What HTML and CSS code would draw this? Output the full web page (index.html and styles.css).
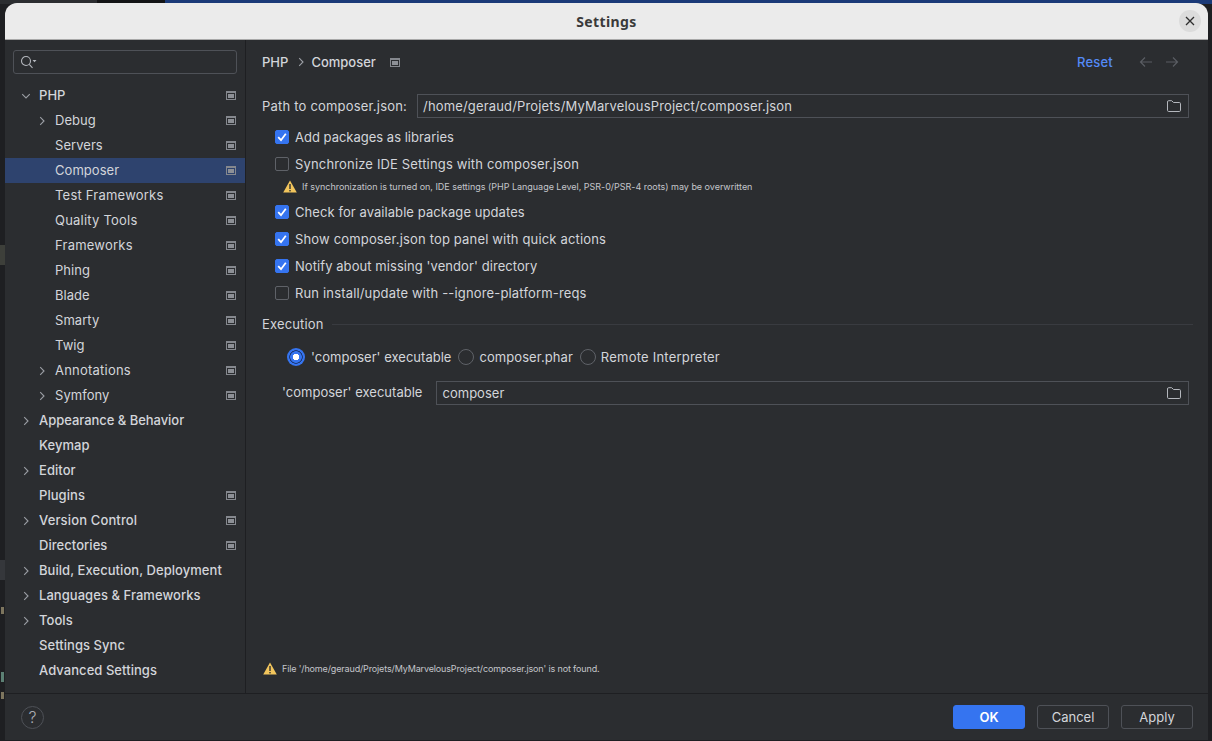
FILE: index.html
```html
<!DOCTYPE html>
<html lang="en">
<head>
<meta charset="utf-8">
<title>Settings</title>
<link rel="stylesheet" href="styles.css">
</head>
<body>
<svg class="sprites" width="0" height="0" aria-hidden="true">
  <symbol id="mod" viewBox="0 0 10 9"><path d="M0 0h10v9H0Zm1 2v6h8V2Z" fill="#85888e"/><rect x="2" y="3" width="6" height="4" fill="#8d9096"/></symbol>
  <symbol id="right" viewBox="0 0 10 10"><path d="M3.2 1.2 7 5 3.2 8.8" fill="none" stroke="#9b9ea4" stroke-width="1.1"/></symbol>
  <symbol id="down" viewBox="0 0 10 10"><path d="M1.2 3.2 5 7 8.800 3.200" fill="none" stroke="#9b9ea4" stroke-width="1.1"/></symbol>
  <symbol id="folder" viewBox="0 0 14 12"><path d="M.5 2A1.200 1.200 0 0 1 1.700.7h3l1.800 1.800h5.800a1.200 1.200 0 0 1 1.200 1.200v6.600a1.200 1.200 0 0 1-1.200 1.200H1.700a1.200 1.200 0 0 1-1.200-1.200Z" fill="none" stroke="#b4b7bd"/></symbol>
  <symbol id="warn" viewBox="0 0 14 13"><path d="M7 .5 13.800 12.500H.2Z" fill="#f2c55c"/><rect x="6.300" y="4" width="1.400" height="5" fill="#2b2d30"/><rect x="6.300" y="10" width="1.400" height="1.400" fill="#2b2d30"/></symbol>
  <symbol id="check" viewBox="0 0 14 14"><path d="M3.200 7.200 6 10.200 10.800 3.800" fill="none" stroke="#fff" stroke-width="1.800"/></symbol>
</svg>

<div class="desktop">
  <div class="bg-top"><span class="bg-a"></span><span class="bg-b"></span><span class="bg-c"></span></div>
  <span class="bg-mark bg-mark-1"></span>
  <span class="bg-mark bg-mark-2"></span>
  <span class="bg-smudge bg-s1"></span>
  <span class="bg-smudge bg-s2"></span>
  <span class="bg-smudge bg-s3"></span>

  <div class="window">
    <header class="titlebar">
      <h1 class="title">Settings</h1>
      <button class="close" aria-label="Close"><svg width="10" height="10" viewBox="0 0 10 10"><path d="M1 1l8 8M9 1l-8 8" stroke="#2e2e2e" stroke-width="1.300"/></svg></button>
    </header>

    <div class="main">
      <nav class="sidebar">
        <div class="search">
          <svg width="18" height="14" viewBox="0 0 18 14"><circle cx="6" cy="6" r="4.500" fill="none" stroke="#b4b7bd" stroke-width="1.100"/><path d="M9.300 9.300 12.500 12.800" stroke="#b4b7bd" stroke-width="1.100"/><path d="M12.500 5h4l-2 2.200Z" fill="#b4b7bd"/></svg>
        </div>
        <ul class="tree">
          <li class="row l0"><svg class="arrow"><use href="#down"/></svg><span class="label">PHP</span><svg class="mod"><use href="#mod"/></svg></li>
          <li class="row l1"><svg class="arrow"><use href="#right"/></svg><span class="label">Debug</span><svg class="mod"><use href="#mod"/></svg></li>
          <li class="row l1"><span class="arrow"></span><span class="label">Servers</span><svg class="mod"><use href="#mod"/></svg></li>
          <li class="row l1 selected"><span class="arrow"></span><span class="label">Composer</span><svg class="mod"><use href="#mod"/></svg></li>
          <li class="row l1"><span class="arrow"></span><span class="label wide">Test Frameworks</span><svg class="mod"><use href="#mod"/></svg></li>
          <li class="row l1"><span class="arrow"></span><span class="label wide">Quality Tools</span><svg class="mod"><use href="#mod"/></svg></li>
          <li class="row l1"><span class="arrow"></span><span class="label wide">Frameworks</span><svg class="mod"><use href="#mod"/></svg></li>
          <li class="row l1"><span class="arrow"></span><span class="label">Phing</span><svg class="mod"><use href="#mod"/></svg></li>
          <li class="row l1"><span class="arrow"></span><span class="label">Blade</span><svg class="mod"><use href="#mod"/></svg></li>
          <li class="row l1"><span class="arrow"></span><span class="label">Smarty</span><svg class="mod"><use href="#mod"/></svg></li>
          <li class="row l1"><span class="arrow"></span><span class="label">Twig</span><svg class="mod"><use href="#mod"/></svg></li>
          <li class="row l1"><svg class="arrow"><use href="#right"/></svg><span class="label wide">Annotations</span><svg class="mod"><use href="#mod"/></svg></li>
          <li class="row l1"><svg class="arrow"><use href="#right"/></svg><span class="label">Symfony</span><svg class="mod"><use href="#mod"/></svg></li>
          <li class="row l0"><svg class="arrow"><use href="#right"/></svg><span class="label narrow">Appearance &amp; Behavior</span></li>
          <li class="row l0"><span class="arrow"></span><span class="label">Keymap</span></li>
          <li class="row l0"><svg class="arrow"><use href="#right"/></svg><span class="label">Editor</span></li>
          <li class="row l0"><span class="arrow"></span><span class="label">Plugins</span><svg class="mod"><use href="#mod"/></svg></li>
          <li class="row l0"><svg class="arrow"><use href="#right"/></svg><span class="label wide-s">Version Control</span><svg class="mod"><use href="#mod"/></svg></li>
          <li class="row l0"><span class="arrow"></span><span class="label">Directories</span><svg class="mod"><use href="#mod"/></svg></li>
          <li class="row l0"><svg class="arrow"><use href="#right"/></svg><span class="label">Build, Execution, Deployment</span></li>
          <li class="row l0"><svg class="arrow"><use href="#right"/></svg><span class="label">Languages &amp; Frameworks</span></li>
          <li class="row l0"><svg class="arrow"><use href="#right"/></svg><span class="label">Tools</span></li>
          <li class="row l0"><span class="arrow"></span><span class="label">Settings Sync</span></li>
          <li class="row l0"><span class="arrow"></span><span class="label">Advanced Settings</span></li>
        </ul>
      </nav>

      <section class="content">
        <div class="crumbs">
          <span class="crumb">PHP</span>
          <svg class="crumb-sep" viewBox="0 0 10 10"><use href="#right"/></svg>
          <span class="crumb">Composer</span>
          <svg class="mod crumb-mod"><use href="#mod"/></svg>
          <a class="reset">Reset</a>
          <svg class="nav-arrow" viewBox="0 0 14 12"><path d="M13 6H1.500M6 1.500 1.500 6 6 10.500" fill="none" stroke="#5a5d63" stroke-width="1.200"/></svg>
          <svg class="nav-arrow" viewBox="0 0 14 12"><path d="M1 6h11.500M8 1.500 12.500 6 8 10.500" fill="none" stroke="#5a5d63" stroke-width="1.200"/></svg>
        </div>

        <div class="path-row">
          <span class="field-label path-label">Path to composer.json:</span>
          <div class="input"><span>/home/geraud/Projets/MyMarvelousProject/composer.json</span><svg class="folder"><use href="#folder"/></svg></div>
        </div>

        <div class="checks">
          <div class="check-row tight"><span class="box on"><svg width="14" height="14"><use href="#check"/></svg></span>Add packages as libraries</div>
          <div class="check-row"><span class="box"></span>Synchronize IDE Settings with composer.json</div>
          <div class="note"><svg class="warn"><use href="#warn"/></svg>If synchronization is turned on, IDE settings (PHP Language Level, PSR-0/PSR-4 roots) may be overwritten</div>
          <div class="check-row semi"><span class="box on"><svg width="14" height="14"><use href="#check"/></svg></span>Check for available package updates</div>
          <div class="check-row"><span class="box on"><svg width="14" height="14"><use href="#check"/></svg></span>Show composer.json top panel with quick actions</div>
          <div class="check-row semi"><span class="box on"><svg width="14" height="14"><use href="#check"/></svg></span>Notify about missing 'vendor' directory</div>
          <div class="check-row"><span class="box"></span>Run install/update with --ignore-platform-reqs</div>
        </div>

        <div class="group-title"><span>Execution</span><i class="rule"></i></div>

        <div class="radios">
          <span class="radio selected-radio"></span><span class="radio-text rt1">'composer' executable</span>
          <span class="radio"></span><span class="radio-text rt2">composer.phar</span>
          <span class="radio"></span><span class="radio-text rt3">Remote Interpreter</span>
        </div>

        <div class="exec-row">
          <span class="field-label exec-label">'composer' executable</span>
          <div class="input exec-input"><span>composer</span><svg class="folder"><use href="#folder"/></svg></div>
        </div>

        <div class="status"><svg class="warn"><use href="#warn"/></svg>File '/home/geraud/Projets/MyMarvelousProject/composer.json' is not found.</div>
      </section>
    </div>

    <footer class="footer">
      <span class="help">?</span>
      <div class="actions">
        <button class="btn primary">OK</button>
        <button class="btn">Cancel</button>
        <button class="btn">Apply</button>
      </div>
    </footer>
  </div>
</div>
</body>
</html>
```
FILE: styles.css
```css
* { box-sizing: border-box; }
html, body { margin: 0; height: 100%; overflow: hidden; }
body { background: #1e1f22; font-family: Inter, "Liberation Sans", sans-serif; font-size: 13px; color: #d3d5da; }
.sprites { position: absolute; }
.desktop { position: relative; height: 741px; padding: 3px 4px 1px 5px; }

.bg-top { position: absolute; left: 0; right: 0; top: 0; height: 4px; display: flex; }
.bg-a { width: 97px; background: #2b2d30; }
.bg-b { width: 68px; background: #131416; }
.bg-c { flex: 1; background: #1b3a78; }
.bg-mark { position: absolute; left: 0; width: 5px; }
.bg-mark-1 { top: 245px; height: 20px; background: #3d3f3a; }
.bg-mark-2 { top: 560px; height: 20px; background: #35373b; }
.bg-smudge { position: absolute; left: 1px; width: 3px; height: 7px; background: #7d755e; }
.bg-s1 { top: 607px; }
.bg-s2 { top: 672px; height: 10px; background: #5c8074; }
.bg-s3 { top: 692px; }

.window { position: relative; height: 737px; display: flex; flex-direction: column; background: #2b2d30; border-radius: 12px 12px 0 0; overflow: hidden; }

.titlebar { flex: none; height: 37px; display: flex; align-items: center; justify-content: center; background: #ebebeb; border-bottom: 1px solid #a9a9a9; position: relative; }
.title { margin: 0; font-size: 14px; font-weight: 700; color: #3a3a3a; letter-spacing: .4px; font-family: "Noto Sans", sans-serif; }
.close { position: absolute; right: 7px; top: 7px; width: 22px; height: 22px; padding: 0; border: 0; border-radius: 50%; background: #dcdcdc; display: flex; align-items: center; justify-content: center; }

.main { flex: 1; min-height: 0; display: flex; }

.sidebar { flex: none; width: 241px; border-right: 1px solid #1e1f22; padding-top: 10px; }
.search { height: 24px; margin: 0 8px; padding-left: 6px; display: flex; align-items: center; border: 1px solid #4e5157; border-radius: 3px; }
.tree { list-style: none; margin: 9px 0 0; padding: 0; }
.row { height: 25px; display: flex; align-items: center; padding-right: 9px; }
.row.selected { background: #2e436e; }
.l0 { padding-left: 16px; }
.l1 { padding-left: 32px; }
.arrow { flex: none; width: 10px; height: 10px; margin-right: 8px; }
.label { flex: 1; white-space: nowrap; line-height: 25px; letter-spacing: .05px; }
.label.wide { letter-spacing: .22px; }
.label.wide-s { letter-spacing: .14px; }
.label.narrow { letter-spacing: -.04px; }
.l0 .label { font-weight: 500; }
.mod { flex: none; width: 10px; height: 9px; }

.content { flex: 1; min-width: 0; padding: 0 19px 0 16px; display: flex; flex-direction: column; letter-spacing: .16px; }
.crumbs { height: 24px; margin-top: 10px; display: flex; align-items: center; }
.crumb { font-weight: 500; letter-spacing: 0; }
.crumb-sep { width: 10px; height: 10px; margin: 0 5px 0 8px; }
.crumb-mod { margin-left: 14px; }
.reset { margin-left: auto; color: #548af7; font-weight: 500; letter-spacing: .2px; }
.nav-arrow { width: 14px; height: 12px; margin-left: 12px; }
.reset + .nav-arrow { margin-left: 26px; }
.crumbs .nav-arrow:last-child { margin-right: 10px; }

.path-row { display: flex; align-items: center; margin-top: 20px; }
.field-label { white-space: nowrap; }
.path-label { letter-spacing: .2px; }
.input { flex: 1; height: 24px; display: flex; align-items: center; justify-content: space-between; padding: 0 7px 0 5px; border: 1px solid #4e5157; }
.path-row .input { margin-left: 10px; }
.folder { width: 14px; height: 12px; }

.checks { margin-top: 5px; padding-left: 13px; }
.check-row { height: 27px; display: flex; align-items: center; gap: 6px; }
.check-row.tight { letter-spacing: 0; }
.check-row.semi { letter-spacing: .07px; }
.box { flex: none; width: 14px; height: 14px; border: 1px solid #5f6268; border-radius: 2px; display: flex; align-items: center; justify-content: center; }
.box.on { background: #3574f0; border-color: #3574f0; }
.box svg { flex: none; }
.note { height: 19px; margin-bottom: 2px; padding-left: 8px; display: flex; align-items: center; gap: 5px; font-size: 9px; letter-spacing: -.02px; color: #c4c6cb; white-space: nowrap; }
.warn { flex: none; width: 14px; height: 13px; }

.group-title { margin-top: 10px; height: 16px; display: flex; align-items: center; gap: 8px; margin-right: -4px; }
.rule { flex: 1; height: 1px; background: #393b40; }

.radios { margin-top: 13px; height: 24px; padding-left: 25px; display: flex; align-items: center; }
.radio { flex: none; width: 16px; height: 16px; border: 1px solid #5f6268; border-radius: 50%; margin-right: 5px; }
.selected-radio { width: 18px; height: 18px; margin-right: 6px; background: radial-gradient(circle, #fff 0 3px, #3574f0 3.5px 5.5px, #1c3a7a 6px 6.5px, #3574f0 7px); border: 0; }
.radio-text { white-space: nowrap; }
.rt1 { letter-spacing: .02px; margin-right: 7px; }
.rt2 { letter-spacing: .07px; margin-right: 7px; }
.rt3 { letter-spacing: .22px; }

.exec-row { display: flex; align-items: center; margin-top: 12px; padding-left: 20px; }
.exec-label { letter-spacing: .02px; position: relative; top: -1px; }
.exec-input { margin-left: 14px; letter-spacing: .02px; }

.status { margin-top: auto; margin-bottom: 18px; display: flex; align-items: center; gap: 5px; padding-left: 1px; font-size: 9px; letter-spacing: -.14px; color: #c4c6cb; white-space: nowrap; }

.footer { flex: none; height: 47px; display: flex; align-items: center; justify-content: space-between; padding: 0 15px 0 16px; border-top: 1px solid #1e1f22; }
.help { width: 23px; height: 23px; border: 1px solid #4e5157; border-radius: 50%; display: flex; align-items: center; justify-content: center; font-size: 16px; font-weight: 300; color: #a9acb2; }
.actions { display: flex; gap: 12px; }
.btn { width: 72px; height: 24px; padding: 0; background: transparent; border: 1px solid #4e5157; border-radius: 3px; font: inherit; color: #d3d5da; }
.btn.primary { background: #3574f0; border-color: #3574f0; color: #fff; font-weight: 600; }
```
